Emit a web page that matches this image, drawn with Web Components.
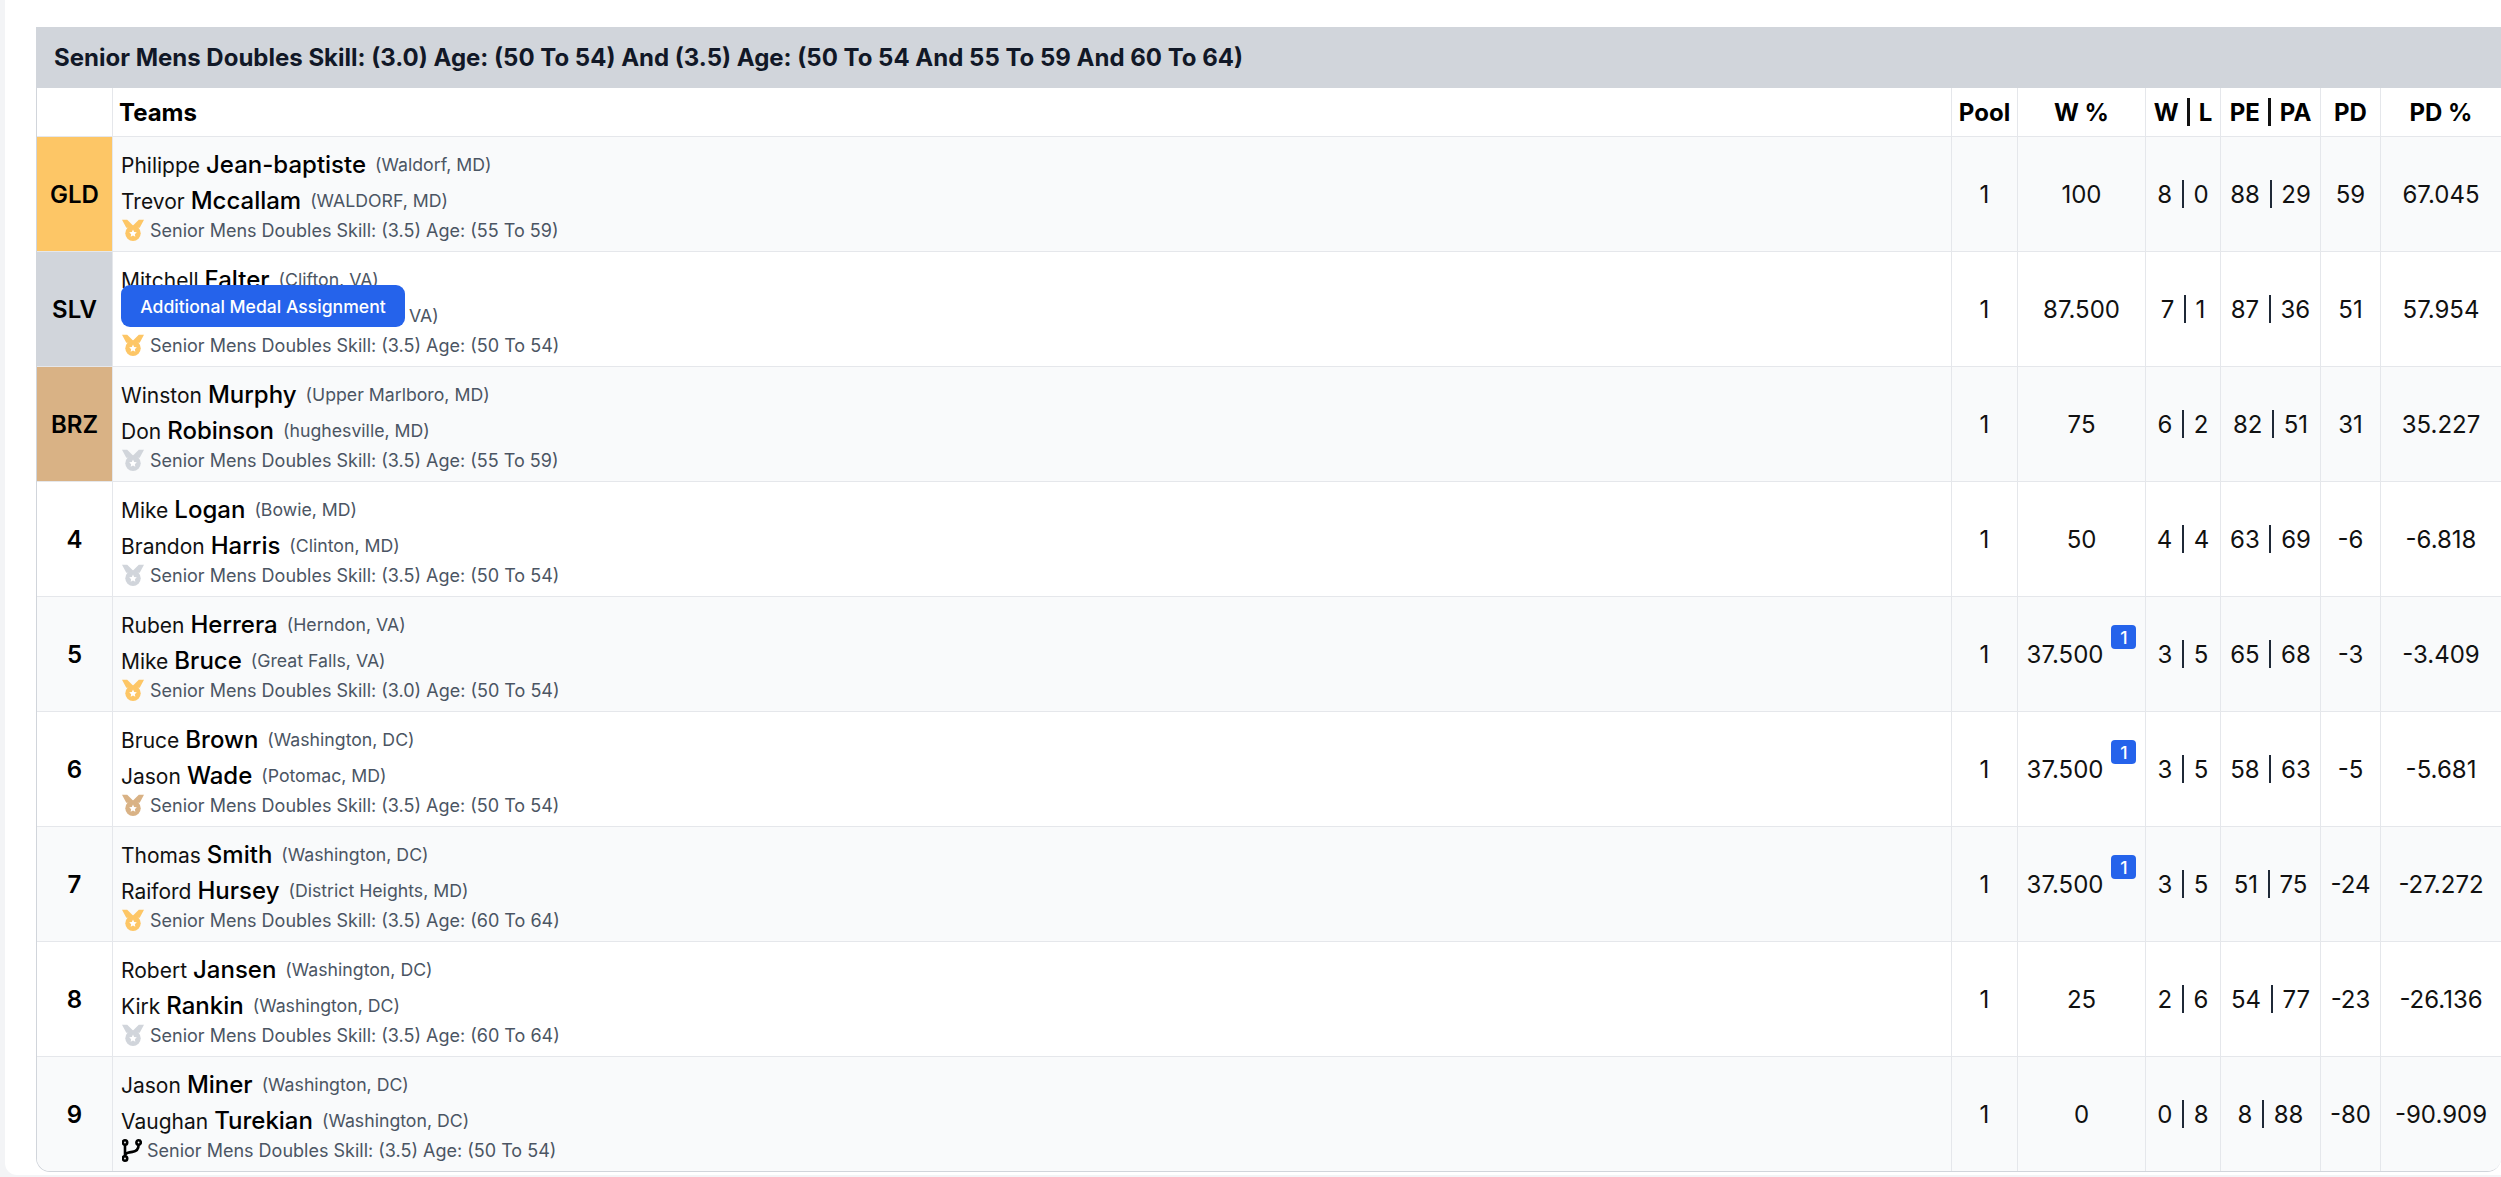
<!DOCTYPE html>
<html lang="en">
<head>
<meta charset="utf-8">
<title>Pool standings</title>
<style>
  html, body { margin: 0; height: 100%; overflow: hidden; background: #f3f4f6; }
  body { font-family: Inter, "Liberation Sans", sans-serif; color: #111827; }
</style>
</head>
<body>
<pool-page>
  <pool-card heading="Senior Mens Doubles Skill: (3.0) Age: (50 To 54) And (3.5) Age: (50 To 54 And 55 To 59 And 60 To 64)">
    <pool-head></pool-head>

    <team-row rank="GLD" tone="gold" striped wp="100" w="8" l="0" pe="88" pa="29" pd="59" pdp="67.045">
      <team-player first="Philippe" last="Jean-baptiste" loc="(Waldorf, MD)"></team-player>
      <team-player first="Trevor" last="Mccallam" loc="(WALDORF, MD)"></team-player>
      <team-event icon="gold">Senior Mens Doubles Skill: (3.5) Age: (55 To 59)</team-event>
    </team-row>

    <team-row rank="SLV" tone="silver" wp="87.500" w="7" l="1" pe="87" pa="36" pd="51" pdp="57.954">
      <team-player first="Mitchell" last="Falter" loc="(Clifton, VA)"></team-player>
      <team-player loc="VA)" style="padding-left: 273px"></team-player>
      <team-event icon="gold">Senior Mens Doubles Skill: (3.5) Age: (50 To 54)</team-event>
      <medal-tip>Additional Medal Assignment</medal-tip>
    </team-row>

    <team-row rank="BRZ" tone="bronze" striped wp="75" w="6" l="2" pe="82" pa="51" pd="31" pdp="35.227">
      <team-player first="Winston" last="Murphy" loc="(Upper Marlboro, MD)"></team-player>
      <team-player first="Don" last="Robinson" loc="(hughesville, MD)"></team-player>
      <team-event icon="silver">Senior Mens Doubles Skill: (3.5) Age: (55 To 59)</team-event>
    </team-row>

    <team-row rank="4" wp="50" w="4" l="4" pe="63" pa="69" pd="-6" pdp="-6.818">
      <team-player first="Mike" last="Logan" loc="(Bowie, MD)"></team-player>
      <team-player first="Brandon" last="Harris" loc="(Clinton, MD)"></team-player>
      <team-event icon="silver">Senior Mens Doubles Skill: (3.5) Age: (50 To 54)</team-event>
    </team-row>

    <team-row rank="5" striped wp="37.500" badge="1" w="3" l="5" pe="65" pa="68" pd="-3" pdp="-3.409">
      <team-player first="Ruben" last="Herrera" loc="(Herndon, VA)"></team-player>
      <team-player first="Mike" last="Bruce" loc="(Great Falls, VA)"></team-player>
      <team-event icon="gold">Senior Mens Doubles Skill: (3.0) Age: (50 To 54)</team-event>
    </team-row>

    <team-row rank="6" wp="37.500" badge="1" w="3" l="5" pe="58" pa="63" pd="-5" pdp="-5.681">
      <team-player first="Bruce" last="Brown" loc="(Washington, DC)"></team-player>
      <team-player first="Jason" last="Wade" loc="(Potomac, MD)"></team-player>
      <team-event icon="bronze">Senior Mens Doubles Skill: (3.5) Age: (50 To 54)</team-event>
    </team-row>

    <team-row rank="7" striped wp="37.500" badge="1" w="3" l="5" pe="51" pa="75" pd="-24" pdp="-27.272">
      <team-player first="Thomas" last="Smith" loc="(Washington, DC)"></team-player>
      <team-player first="Raiford" last="Hursey" loc="(District Heights, MD)"></team-player>
      <team-event icon="gold">Senior Mens Doubles Skill: (3.5) Age: (60 To 64)</team-event>
    </team-row>

    <team-row rank="8" wp="25" w="2" l="6" pe="54" pa="77" pd="-23" pdp="-26.136">
      <team-player first="Robert" last="Jansen" loc="(Washington, DC)"></team-player>
      <team-player first="Kirk" last="Rankin" loc="(Washington, DC)"></team-player>
      <team-event icon="silver">Senior Mens Doubles Skill: (3.5) Age: (60 To 64)</team-event>
    </team-row>

    <team-row rank="9" striped last wp="0" w="0" l="8" pe="8" pa="88" pd="-80" pdp="-90.909">
      <team-player first="Jason" last="Miner" loc="(Washington, DC)"></team-player>
      <team-player first="Vaughan" last="Turekian" loc="(Washington, DC)"></team-player>
      <team-event icon="branch">Senior Mens Doubles Skill: (3.5) Age: (50 To 54)</team-event>
    </team-row>
  </pool-card>
</pool-page>

<script>
/** Column widths shared by the head row and every team row. */
const COLUMNS = '76px 1839px 66px 128px 75px 100px 60px 120px';

const CELL_CSS = `
  .cell {
    display: flex; align-items: center; justify-content: center;
    box-sizing: border-box; border-right: 1px solid #e5e7eb;
    font-size: 24px; color: #111;
  }
  .cell:last-child { border-right: 0; }
  .split { display: inline-flex; align-items: center; gap: 9.7px; }
  .split i { display: block; width: 2px; height: 28px; background: #1f2937; }
`;

/** White sheet the card sits on. */
class PoolPage extends HTMLElement {
  constructor() {
    super();
    this.attachShadow({ mode: 'open' });
    this.shadowRoot.innerHTML = `
      <style>
        :host {
          display: block; box-sizing: border-box;
          width: 2496px; height: 1175px; margin-left: 5px;
          padding: 27px 0 0 31px;
          background: #fff; border-radius: 0 0 0 12px;
        }
      </style>
      <slot></slot>`;
  }
}

/** Bordered table card, with the event name as its title bar. */
class PoolCard extends HTMLElement {
  constructor() {
    super();
    this.attachShadow({ mode: 'open' });
    this.shadowRoot.innerHTML = `
      <style>
        :host {
          display: block; box-sizing: border-box; width: 2465px;
          border: 1px solid #d1d5db; border-top: 0; border-right: 0;
          border-radius: 0 0 14px 14px; overflow: hidden;
          --columns: ${COLUMNS};
        }
        .title {
          height: 61px; display: flex; align-items: center; padding-left: 18px;
          margin-left: -1px;
          background: #d1d5db; color: #111827;
          font-size: 24px; font-weight: 700;
        }
      </style>
      <div class="title"></div>
      <slot></slot>`;
    this.shadowRoot.querySelector('.title').textContent = this.getAttribute('heading');
  }
}

/** Column header row. */
class PoolHead extends HTMLElement {
  constructor() {
    super();
    this.attachShadow({ mode: 'open' });
    this.shadowRoot.innerHTML = `
      <style>
        :host {
          display: grid; grid-template-columns: var(--columns);
          height: 49px; box-sizing: border-box;
          border-bottom: 1px solid #e5e7eb; background: #fff;
          padding-bottom: 1px;
        }
        ${CELL_CSS}
        .cell { font-weight: 700; color: #000; margin-bottom: -1px; }
        .teams { justify-content: flex-start; padding-left: 6px; }
        .split { gap: 8.5px; }
        .split i { width: 3px; background: #111; }
      </style>
      <div class="cell"></div>
      <div class="cell teams">Teams</div>
      <div class="cell">Pool</div>
      <div class="cell">W %</div>
      <div class="cell"><span class="split"><span>W</span><i></i><span>L</span></span></div>
      <div class="cell"><span class="split"><span>PE</span><i></i><span>PA</span></span></div>
      <div class="cell">PD</div>
      <div class="cell">PD %</div>`;
  }
}

/** One standings row: rank, slotted team block, then the numbers. */
class TeamRow extends HTMLElement {
  constructor() {
    super();
    this.attachShadow({ mode: 'open' });
    const a = (name) => this.getAttribute(name) || '';
    const badge = this.hasAttribute('badge') ? `<b class="badge">${a('badge')}</b>` : '';
    this.shadowRoot.innerHTML = `
      <style>
        :host {
          display: grid; grid-template-columns: var(--columns);
          height: 115px; box-sizing: border-box;
          border-bottom: 1px solid #e5e7eb; background: #fff;
        }
        :host([striped]) { background: #f9fafb; }
        :host([last]) { height: 114px; border-bottom: 0; }
        ${CELL_CSS}
        .rank { font-weight: 600; color: #000; }
        :host([tone="gold"]) .rank { background: #fdc666; }
        :host([tone="silver"]) .rank { background: #d1d5db; }
        :host([tone="bronze"]) .rank { background: #d9b285; }
        .teams {
          position: relative; display: flex; flex-direction: column;
          align-items: stretch; justify-content: flex-start;
          padding: 9px 0 0 8px;
        }
        .wp { gap: 8px; }
        .badge {
          width: 25px; height: 24px; margin-top: -34px;
          display: flex; align-items: center; justify-content: center;
          background: #2563eb; color: #fff; border-radius: 4px;
          font-size: 17.6px; font-weight: 500;
        }
      </style>
      <div class="cell rank">${a('rank')}</div>
      <div class="cell teams"><slot></slot></div>
      <div class="cell">1</div>
      <div class="cell wp"><span>${a('wp')}</span>${badge}</div>
      <div class="cell"><span class="split"><span>${a('w')}</span><i></i><span>${a('l')}</span></span></div>
      <div class="cell"><span class="split"><span>${a('pe')}</span><i></i><span>${a('pa')}</span></span></div>
      <div class="cell">${a('pd')}</div>
      <div class="cell">${a('pdp')}</div>`;
  }
}

/** Player line: first name, bolder last name, grey hometown. */
class TeamPlayer extends HTMLElement {
  constructor() {
    super();
    this.attachShadow({ mode: 'open' });
    const a = (name) => this.getAttribute(name) || '';
    this.shadowRoot.innerHTML = `
      <style>
        :host {
          display: flex; align-items: center; gap: 9px; height: 36px;
          white-space: nowrap; color: #111;
        }
        .first { font-size: 21px; }
        .last { font-size: 24px; font-weight: 500; color: #000; }
        .name { display: inline-flex; align-items: baseline; gap: 6px; }
        .loc { font-size: 17.7px; color: #4b5563; }
      </style>
      <span class="name"><span class="first">${a('first')}</span><span class="last">${a('last')}</span></span>
      <span class="loc">${a('loc')}</span>`;
  }
}

/** Medal ribbon + disc with a star, tinted per placing. */
function medalSvg(color) {
  return `<svg width="22" height="22" viewBox="0 0 22 22" aria-hidden="true">
    <path fill="${color}" d="M0 .7h5.2L11 6.6 16.8.7H22l-4.3 8H4.3z"/>
    <circle fill="${color}" cx="11" cy="14.3" r="7.7"/>
    <path fill="#fff" d="M11 10.5l1.15 2.45 2.65.35-1.95 1.83.5 2.65L11 16.48l-2.35 1.3.5-2.65-1.95-1.83 2.65-.35z"/>
  </svg>`;
}

const EVENT_ICONS = {
  gold: medalSvg('#fdc666'),
  silver: medalSvg('#d1d5db'),
  bronze: medalSvg('#d9b285'),
  branch: `<svg width="20" height="23" viewBox="0 0 20 23" fill="none" stroke="#000" stroke-width="2.6" stroke-linecap="round" aria-hidden="true">
    <circle cx="3" cy="3.5" r="2.2"/><circle cx="16.6" cy="3.5" r="2.2"/><circle cx="3" cy="19.5" r="2.2"/>
    <path d="M3 6v11M16.6 6c0 4-2.6 6.4-6.2 6.9l-3 .5C5 13.8 3 14.8 3 17"/>
  </svg>`,
};

/** Event line under the players, with a medal or bracket icon. */
class TeamEvent extends HTMLElement {
  constructor() {
    super();
    this.attachShadow({ mode: 'open' });
    const icon = this.getAttribute('icon');
    this.shadowRoot.innerHTML = `
      <style>
        :host {
          display: flex; align-items: center; height: 24px;
          font-size: 18px; color: #4b5563; white-space: nowrap;
        }
        svg { flex: none; margin: 0 6px 0 1px; display: block; }
        :host([icon="branch"]) svg { margin-right: 5px; }
      </style>
      ${EVENT_ICONS[icon]}<slot></slot>`;
  }
}

/** Blue tooltip that sits over the row's text. */
class MedalTip extends HTMLElement {
  constructor() {
    super();
    this.attachShadow({ mode: 'open' });
    this.shadowRoot.innerHTML = `
      <style>
        :host {
          position: absolute; left: 8px; top: 33px;
          box-sizing: border-box; width: 284px; height: 42px;
          display: flex; align-items: center; justify-content: center;
          background: #2563eb; color: #fff; border-radius: 9px;
          font-size: 17.6px; font-weight: 500; white-space: nowrap;
        }
      </style>
      <slot></slot>`;
  }
}

customElements.define('pool-page', PoolPage);
customElements.define('pool-card', PoolCard);
customElements.define('pool-head', PoolHead);
customElements.define('team-row', TeamRow);
customElements.define('team-player', TeamPlayer);
customElements.define('team-event', TeamEvent);
customElements.define('medal-tip', MedalTip);
</script>
</body>
</html>
